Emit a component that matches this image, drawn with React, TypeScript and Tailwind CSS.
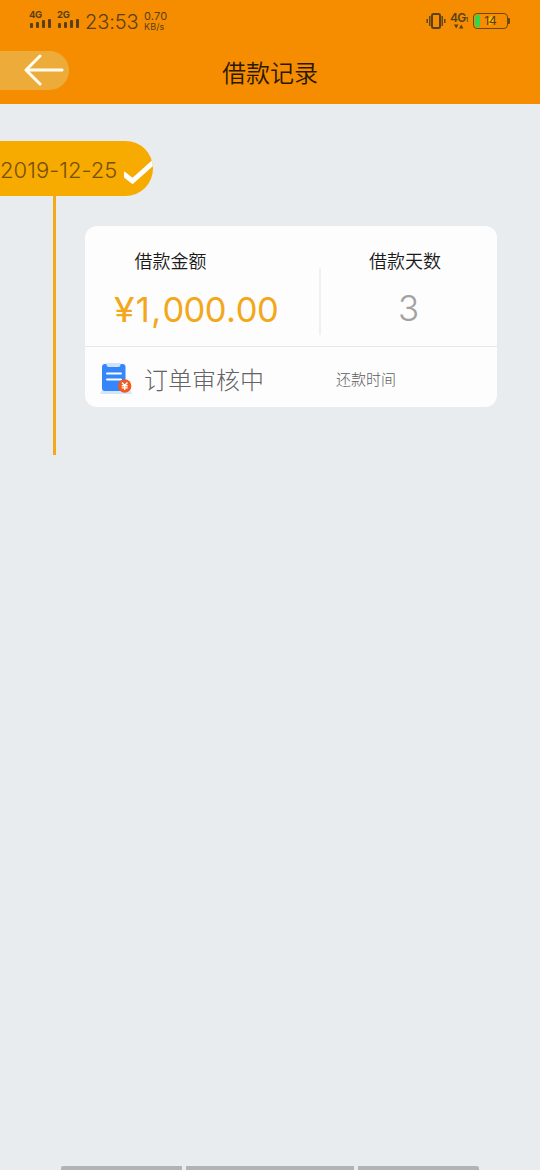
import type { ReactNode } from "react";

const SIGNALS = [
  { label: "4G", heights: ["h-[5px]", "h-[6px]", "h-[8px]", "h-[9px]"] },
  { label: "2G", heights: ["h-[5px]", "h-[6px]", "h-[8px]", "h-[9px]"] },
];

const CJK = "font-['Noto_Sans_CJK_SC',sans-serif] whitespace-nowrap";

function Signal({ label, heights }: { label: string; heights: string[] }) {
  return (
    <div className="w-[22px]">
      <div className="h-[9px] text-[9.5px] font-bold leading-[10px] tracking-[-0.3px]">
        {label}
      </div>
      <div className="flex h-[9px] items-end gap-[3px] pl-px">
        {heights.map((h, i) => (
          <span key={i} className={`w-[3px] rounded-[1px] bg-[#584018] ${h}`} />
        ))}
      </div>
    </div>
  );
}

function StatusBar() {
  return (
    <div className="flex h-[50px] items-start text-[#584018]">
      {/* Left: networks, clock, speed */}
      <div className="flex gap-[6px] pl-[29px] pt-[10px]">
        {SIGNALS.map((s) => (
          <Signal key={s.label} {...s} />
        ))}
      </div>
      <div className="ml-[6px] w-[54px] whitespace-nowrap pt-[12px] text-[20px] font-[350] leading-[20px] tracking-[-0.1px]">
        23:53
      </div>
      <div className="ml-[5px] pt-[11px]">
        <div className="h-[11px] text-[11px] leading-[11px] tracking-[0.15px]">0.70</div>
        <div className="h-[10px] text-[9px] leading-[10px] tracking-[0.1px]">KB/s</div>
      </div>

      {/* Right: vibrate, data, battery */}
      <svg
        className="ml-auto mt-[12px] h-[18px] w-5"
        viewBox="0 0 20 18"
        fill="none"
        stroke="#584018"
      >
        <rect x="6" y="2" width="8" height="14" rx="1.5" strokeWidth="2" />
        <path d="M3.8 4v10M16.2 4v10M1.2 7v4M18.8 7v4" strokeWidth="1.4" />
      </svg>
      <div className="ml-[4px] w-[20px] pt-[12px]">
        <div className="flex h-[12px] text-[12px] font-semibold leading-[12px] tracking-[-0.7px]">
          4G<span className="pt-[2px] text-[6px] leading-[12px]">1</span>
        </div>
        <svg className="ml-[4px] h-[5px] w-[10px]" viewBox="0 0 10 5" fill="#584018">
          <path d="M0 .5h4.4L2.2 4.5zM5 4.5h4.4L7.2.5z" />
        </svg>
      </div>
      <div className="mr-[30px] mt-[13px] flex items-center pl-[3px]">
        <div className="relative h-[16px] w-[35px] rounded-[4px] border-[1.5px] border-[#6b4a12]">
          <span className="absolute left-[1px] top-[1px] h-[12px] w-[5px] rounded-l-[2px] bg-[#33d84a]" />
          <svg className="absolute left-[13px] top-[1px] h-[11px] w-[8px]" viewBox="0 0 8 11">
            <path d="M5 0 0 6h3L2 11l6-6.5H4.5z" fill="#ffc400" />
          </svg>
          <span className="absolute inset-0 text-center text-[12px] leading-[14px]">14</span>
        </div>
        <span className="h-[6px] w-[2px] rounded-r-[1px] bg-[#6b4a12]" />
      </div>
    </div>
  );
}

function Header() {
  return (
    <header className="h-[104px] bg-[#f68d00]">
      <StatusBar />
      <div className="grid grid-cols-[1fr_auto_1fr]">
        <button className="mt-[0.5px] h-[39px] w-[69px] rounded-r-[20px] bg-[#edac3a]" aria-label="返回">
          <svg
            className="ml-[24px] h-[32px] w-[40px]"
            viewBox="0 0 40 32"
            fill="none"
            stroke="#fffdf2"
            strokeWidth="3"
            strokeLinecap="round"
            strokeLinejoin="round"
          >
            <path d="M16 2 2 16l14 14M2 16h36" />
          </svg>
        </button>
        <h1 className={`pt-[4px] text-[24px] font-[350] leading-[36px] text-[#2a1800] ${CJK}`}>借款记录</h1>
      </div>
    </header>
  );
}

function OrderIcon() {
  return (
    <svg className="mt-px h-[34px] w-[34px] shrink-0" viewBox="0 0 34 34">
      <path d="M4 27h26l3 6H1z" fill="#d5e6fc" />
      <rect x="3" y="3" width="23.5" height="27" rx="3" fill="#3585fb" />
      <path d="M7.5 2h14v1.5a2.5 2.5 0 0 1-2.5 2.5h-9a2.5 2.5 0 0 1-2.5-2.5z" fill="#cfe2ff" />
      <path d="M8 12.5h14M8 18.5h14" stroke="#fff" strokeWidth="2" strokeLinecap="round" />
      <circle cx="25.7" cy="25" r="6.7" fill="#f15a1d" />
      <path
        d="m23 21.5 2.7 3 2.7-3M25.7 24.5v4.5M22.7 24.7h6M22.7 26.9h6"
        stroke="#fff"
        strokeWidth="1.4"
        fill="none"
      />
    </svg>
  );
}

function Field({ label, children, className }: { label: string; children: ReactNode; className: string }) {
  return (
    <div className={`flex flex-col items-center ${className}`}>
      <div className={`h-[28px] text-[18px] font-[350] leading-[28px] text-[#1a1a1a] ${CJK}`}>{label}</div>
      {children}
    </div>
  );
}

function LoanCard() {
  return (
    <section className="ml-[85px] mt-[29px] h-[181px] w-[412px] rounded-[12px] bg-[#fdfdfd]">
      <div className="flex h-[121px] border-b border-[#e6e7e9] pt-[20px]">
        <Field label="借款金额" className="w-[171px]">
          <div className="mt-[15px] flex whitespace-nowrap pl-[51px] text-[34.5px] leading-[42px] text-[#f3a71a]">
            <span className="w-[22px] origin-left scale-x-[1.08]">¥</span>
            <span className="tracking-[1.3px]">1,</span>
            <span className="tracking-[-0.6px]">000</span>
            <span>.</span>
            <span className="tracking-[-0.6px]">00</span>
          </div>
        </Field>
        <div className="ml-[63px] mt-[22px] h-[67px] w-[2px] bg-[#f0f0f1]" />
        <Field label="借款天数" className="ml-[48px] w-[72px]">
          <div className="mt-[12px] pl-[7px] text-[35px] font-light leading-[44px] text-[#a2a2a2]">3</div>
        </Field>
      </div>
      <div className="flex h-[60px] items-center pl-[14px]">
        <OrderIcon />
        <div className={`ml-[11px] w-[192px] pt-[3px] text-[24px] font-light leading-[36px] text-[#636363] ${CJK}`}>
          订单审核中
        </div>
        <div className={`pt-[4px] text-[15px] font-light leading-[22px] text-[#5c5c5c] ${CJK}`}>还款时间</div>
      </div>
    </section>
  );
}

export default function App() {
  return (
    <div className="flex h-[1170px] w-[540px] flex-col overflow-hidden bg-[#e8ecef] font-['Inter',sans-serif]">
      <Header />
      <main className="grow pt-[37px]">
        {/* Date tab */}
        <div className="flex h-[55px] w-[153px] items-center overflow-hidden rounded-r-[28px] bg-[#f7aa00]">
          <span className="w-[124px] whitespace-nowrap pt-[3px] text-[22px] font-light leading-[28px] tracking-[0.05px] text-[#75510a]">
            2019-12-25
          </span>
          <svg className="mt-[8px] h-[28px] w-[29px] shrink-0" viewBox="0 0 29 28" fill="none">
            <path d="M-1 14.5 8.5 22 31 2" stroke="#fff" strokeWidth="5" />
          </svg>
        </div>
        {/* Timeline */}
        <div className="ml-[52.5px] h-[259px] w-[3px] bg-[#f3a91a]">
          <div className="-ml-[52.5px] w-[540px] pt-px">
            <LoanCard />
          </div>
        </div>
      </main>
      {/* Gesture bar */}
      <div className="flex h-[4px] gap-[4px] pl-[61px]">
        <span className="w-[121px] rounded-tl-[2px] bg-[#b1b4b6]" />
        <span className="w-[168px] bg-[#b1b4b6]" />
        <span className="w-[121px] rounded-tr-[2px] bg-[#b1b4b6]" />
      </div>
    </div>
  );
}
